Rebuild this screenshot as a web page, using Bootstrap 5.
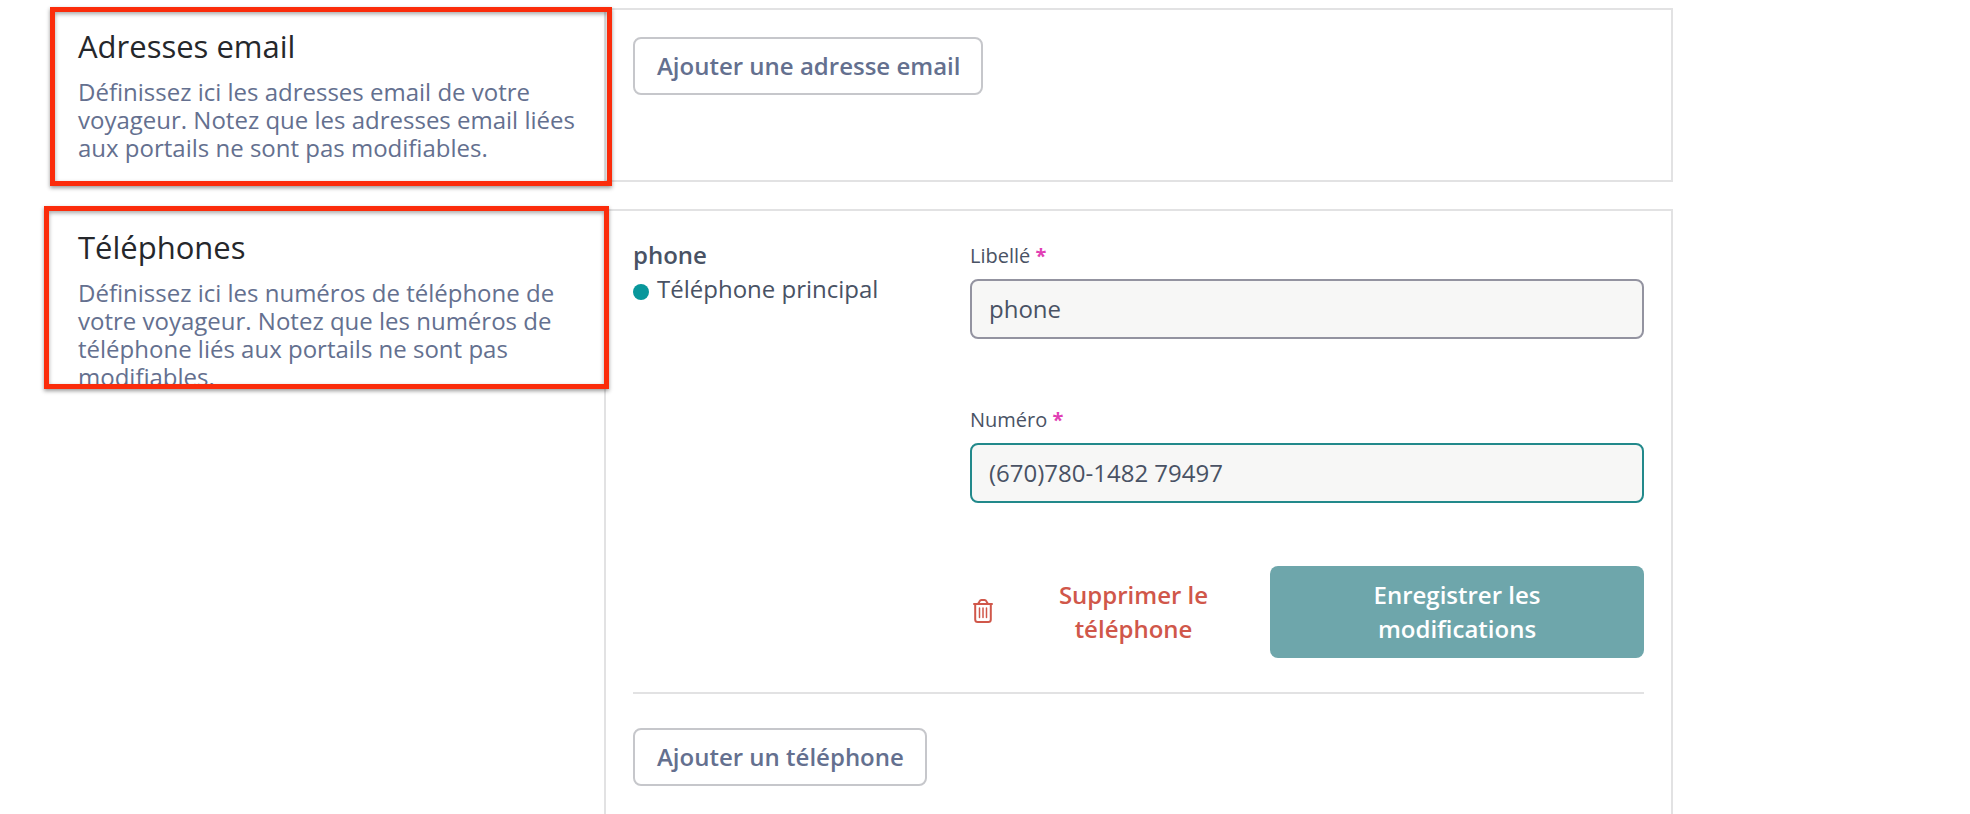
<!DOCTYPE html>
<html lang="fr">
<head>
<meta charset="utf-8">
<meta name="viewport" content="width=device-width, initial-scale=1">
<title>Coordonnées du voyageur</title>
<link href="https://cdn.jsdelivr.net/npm/bootstrap@5.3.0/dist/css/bootstrap.min.css" rel="stylesheet">
<style>
  body { font-family: "Open Sans", "Noto Sans", sans-serif; font-size: 24px; line-height: 34px; color: #495264; background: #fff; }
  .settings { display: grid; grid-template-columns: 604fr 1069fr 297fr; grid-template-rows: auto 1fr; row-gap: 27px; padding-top: 8px; }
  .intro { grid-column: 1; padding: 20px 20px 20px 78px; }
  .intro h2 { font-size: 31px; line-height: 36px; margin-bottom: 14px; font-weight: 400; color: #25272b; }
  .intro p { line-height: 28px; color: #64708f; }
  .panel { grid-column: 2; padding: 27px; border: 2px solid #e2e2e3; }
  /* Highlight frames laid over the section introductions */
  .frame { border: 5px solid #fb2c0b; box-shadow: 0 2px 4px rgba(0,0,0,.4), inset 0 2px 4px rgba(0,0,0,.35); pointer-events: none; }
  .frame-email { top: -1px; left: 50px; right: -8px; height: 179px; }
  .frame-phone { top: -3px; left: 44px; right: -5px; height: 183px; }
  .btn { font-size: 24px; line-height: 34px; font-weight: 600; border-radius: 8px; }
  .btn-add, .btn-add:hover { padding: 10px 21px 10px 22px; border: 2px solid #c6c7cb; color: #64708f; background: #fff; }
  .btn-save, .btn-save:hover { padding: 12px 24px; border: 0; color: #fff; background: #6ea6ab; }
  .btn-remove, .btn-remove:hover { padding: 12px 20px 12px 3px; border: 0; color: #d0574a; }
  .actions { display: grid; grid-template-columns: 300fr 374fr; }
  .fields { display: grid; row-gap: 63px; }
  .form-label { font-size: 20px; line-height: 36px; margin-bottom: 5px; display: block; }
  .required { color: #e13fb4; font-weight: 700; }
  .form-control, .form-control:focus { font-size: 24px; line-height: 34px; padding: 11px 17px; border: 2px solid #9393a0; border-radius: 8px; color: #495264; background: #f7f7f6; }
  .form-control.current { border-color: #22898b; }
  .dot { width: 16px; height: 16px; background: #08979b; margin-top: 6px; }
  .separator { margin: 34px 0; border-top: 2px solid #e2e2e3; opacity: 1; }
</style>
</head>
<body>
<main class="settings min-vh-100">
  <section class="intro position-relative">
    <h2>Adresses email</h2>
    <p class="mb-0">Définissez ici les adresses email de votre voyageur. Notez que les adresses email liées aux portails ne sont pas modifiables.</p>
    <div class="frame frame-email position-absolute"></div>
  </section>
  <section class="panel">
    <button type="button" class="btn btn-add">Ajouter une adresse email</button>
  </section>

  <section class="intro position-relative">
    <h2>Téléphones</h2>
    <p class="mb-0">Définissez ici les numéros de téléphone de votre voyageur. Notez que les numéros de téléphone liés aux portails ne sont pas modifiables.</p>
    <div class="frame frame-phone position-absolute"></div>
  </section>
  <section class="panel border-bottom-0">
    <div class="row g-0">
      <div class="col-4">
        <div class="fw-semibold">phone</div>
        <div class="d-flex align-items-center"><span class="dot rounded-circle flex-shrink-0 me-2"></span>Téléphone principal</div>
      </div>
      <form class="col-8 fields">
        <div>
          <label class="form-label" for="libelle">Libellé <span class="required">*</span></label>
          <input class="form-control" type="text" id="libelle" value="phone">
        </div>
        <div>
          <label class="form-label" for="numero">Numéro <span class="required">*</span></label>
          <input class="form-control current" type="tel" id="numero" value="(670)780-1482 79497">
        </div>
        <div class="actions">
          <button type="button" class="btn btn-remove d-flex align-items-center">
            <svg class="flex-shrink-0 me-4" width="20" height="26" viewBox="0 0 20 26" fill="none" stroke="currentColor" stroke-width="2" stroke-linecap="round" stroke-linejoin="round" aria-hidden="true">
              <path d="M1 5h18M5 5l1.500-2.600Q7.200 1 8.500 1h3q1.300 0 2 1.400L15 5M2.200 5v15.500Q2.200 23 4.700 23h10.600q2.500 0 2.500-2.500V5"/>
              <path d="M6.500 9v9.500M10 9v9.500M13.500 9v9.500" stroke-width="1.500"/>
            </svg>
            <span class="flex-fill">Supprimer le téléphone</span>
          </button>
          <button type="submit" class="btn btn-save">Enregistrer les modifications</button>
        </div>
      </form>
    </div>
    <hr class="separator">
    <button type="button" class="btn btn-add">Ajouter un téléphone</button>
  </section>
</main>
<script src="https://cdn.jsdelivr.net/npm/bootstrap@5.3.0/dist/js/bootstrap.bundle.min.js"></script>
</body>
</html>
